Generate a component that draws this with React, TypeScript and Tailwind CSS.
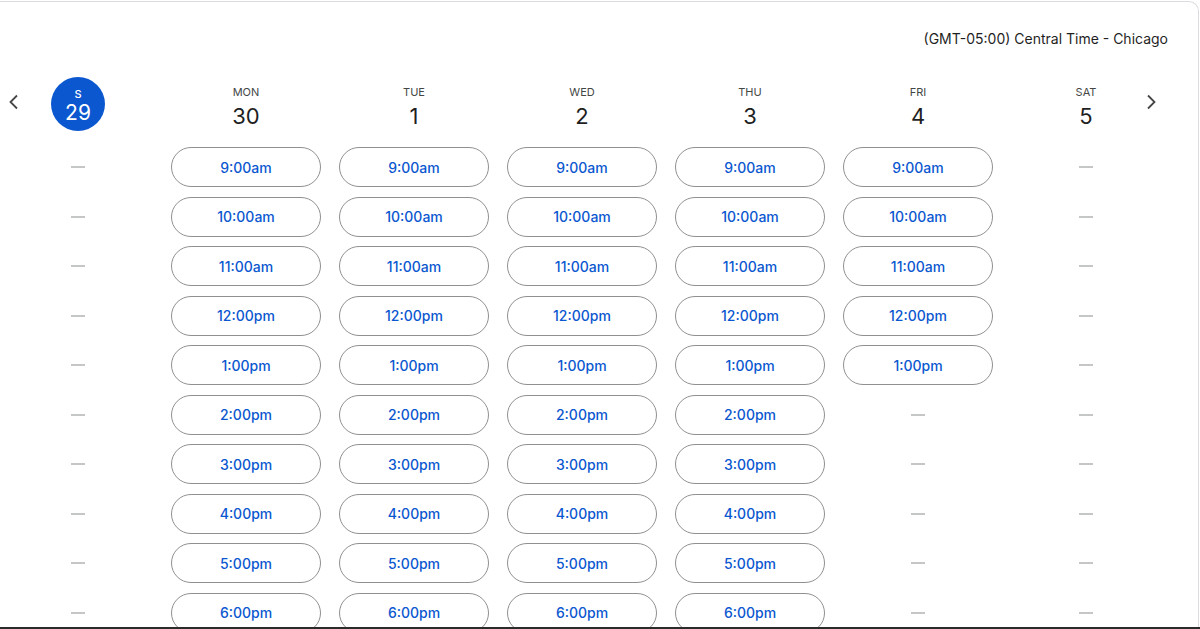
import React from "react";

const times = [
  "9:00am",
  "10:00am",
  "11:00am",
  "12:00pm",
  "1:00pm",
  "2:00pm",
  "3:00pm",
  "4:00pm",
  "5:00pm",
  "6:00pm",
];

type Day = { label: string; num: string; selected?: boolean; count: number };

const days: Day[] = [
  { label: "S", num: "29", selected: true, count: 0 },
  { label: "MON", num: "30", count: 10 },
  { label: "TUE", num: "1", count: 10 },
  { label: "WED", num: "2", count: 10 },
  { label: "THU", num: "3", count: 10 },
  { label: "FRI", num: "4", count: 5 },
  { label: "SAT", num: "5", count: 0 },
];

function Dash() {
  return (
    <div className="h-[40px] flex items-center justify-center">
      <div className="w-[14px] h-[2px] bg-[#c4c7c5]" />
    </div>
  );
}

function Slot({ t }: { t: string }) {
  return (
    <button className="h-[40px] w-full rounded-full border border-[#8e918f] bg-white flex items-center justify-center text-[14px] font-medium text-[#0b57d0]">
      {t}
    </button>
  );
}

function Header({ d }: { d: Day }) {
  if (d.selected) {
    return (
      <div className="h-[54px] flex justify-center">
        <div className="w-[54px] h-[54px] rounded-full bg-[#0b57d0] flex flex-col items-center pt-[11px] text-white">
          <div className="text-[11px] leading-[12px] font-medium">{d.label}</div>
          <div className="text-[21px] leading-[22px] mt-[2px]">{d.num}</div>
        </div>
      </div>
    );
  }
  return (
    <div className="h-[54px] flex flex-col items-center pt-[9px]">
      <div className="text-[11px] leading-[12px] text-[#444746]">{d.label}</div>
      <div className="text-[22px] leading-[28px] mt-[4px] text-[#1f1f1f]">{d.num}</div>
    </div>
  );
}

export default function App() {
  return (
    <div
      className="w-[1200px] h-[629px] bg-white overflow-hidden flex flex-col"
      style={{ fontFamily: "Inter, Roboto, Arial, sans-serif" }}
    >
      <div className="mt-px h-[626px] w-[1199px] border-t border-r border-[#dadce0] rounded-tr-[10px] relative overflow-hidden">
        <div className="flex justify-end pr-[30px] pt-[27px]">
          <div className="text-[14px] leading-[20px] text-[#1f1f1f]">
            (GMT-05:00) Central Time - Chicago
          </div>
        </div>
        <div className="flex gap-[18px] ml-[3px] mt-[28px]">
          {days.map((d, i) => (
            <div key={i} className="w-[150px] flex flex-col">
              <Header d={d} />
              <div className="mt-[16px] flex flex-col gap-[9.5px]">
                {times.map((t, j) =>
                  j < d.count ? <Slot key={j} t={t} /> : <Dash key={j} />
                )}
              </div>
            </div>
          ))}
        </div>
        <button className="absolute left-[1px] top-[88px] w-[24px] h-[24px] text-[#444746]">
          <svg viewBox="0 0 24 24" width="24" height="24" fill="none" stroke="currentColor" strokeWidth="1.8">
            <path d="M16 5.5L9.5 12l6.5 6.5" />
          </svg>
        </button>
        <button className="absolute left-[1140px] top-[88px] w-[24px] h-[24px] text-[#444746]">
          <svg viewBox="0 0 24 24" width="24" height="24" fill="none" stroke="currentColor" strokeWidth="1.8">
            <path d="M8 5.5l6.5 6.5L8 18.5" />
          </svg>
        </button>
      </div>
      <div className="h-[2px] bg-[#2b2b2b]" />
    </div>
  );
}
